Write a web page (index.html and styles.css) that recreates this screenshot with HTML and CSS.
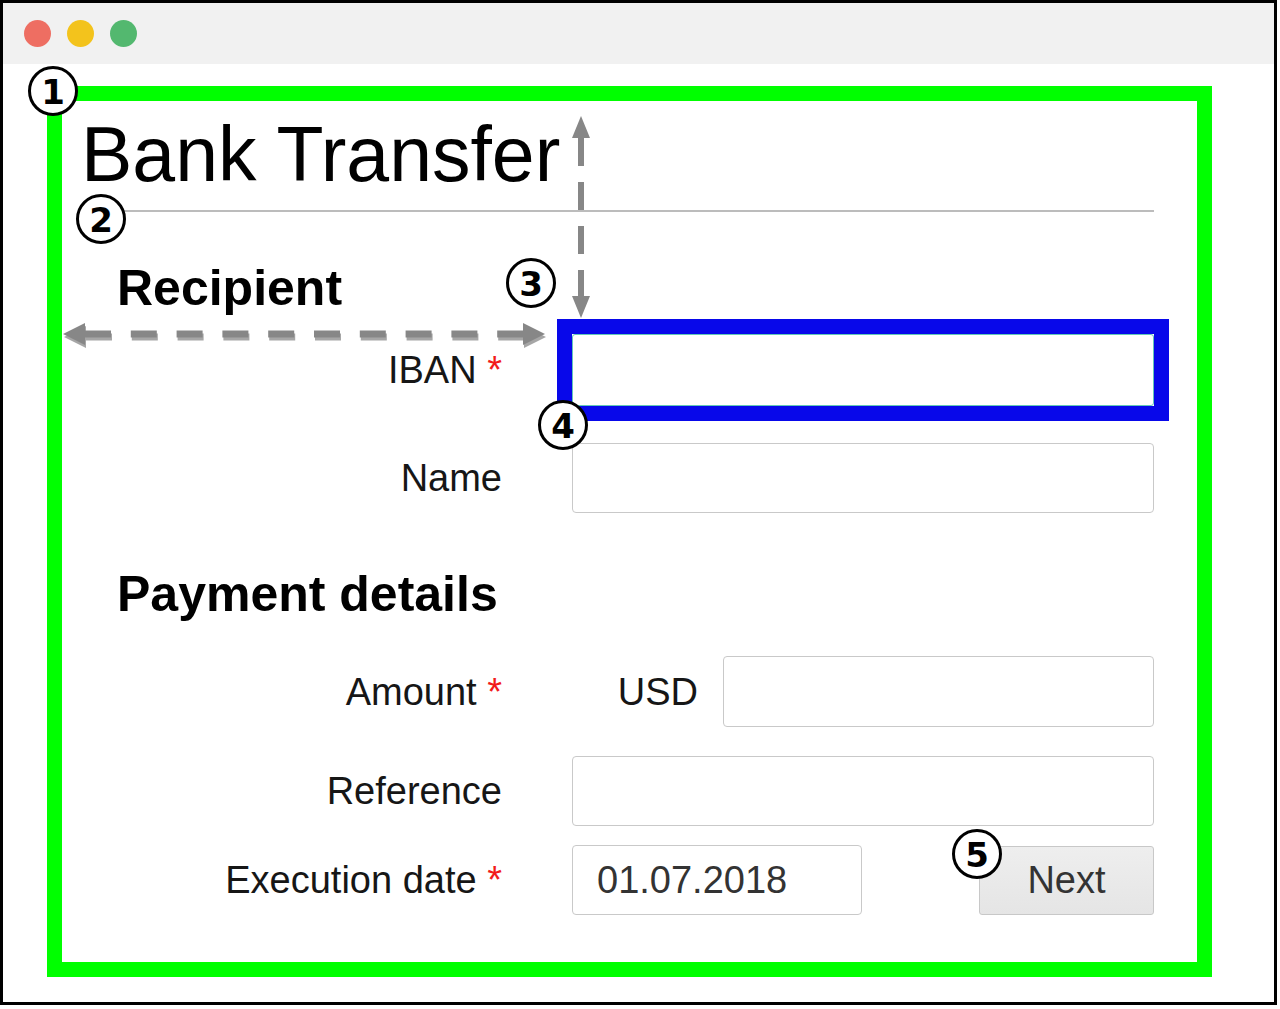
FILE: index.html
```html
<!DOCTYPE html>
<html lang="en">
<head>
<meta charset="utf-8">
<title>Bank Transfer</title>
<link rel="stylesheet" href="styles.css">
</head>
<body>
<div class="window">
  <div class="titlebar">
    <span class="dot dot-red"></span>
    <span class="dot dot-yellow"></span>
    <span class="dot dot-green"></span>
  </div>
  <div class="viewport">
    <main class="frame">
      <h1 class="title">Bank Transfer</h1>
      <hr class="rule">
      <h2 class="group-title group-recipient">Recipient</h2>
      <div class="row row-iban">
        <label class="label">IBAN <span class="req">*</span></label>
        <div class="focus-ring">
          <input class="input input-focus" type="text">
        </div>
      </div>
      <div class="row row-name">
        <label class="label">Name</label>
        <input class="input" type="text">
      </div>
      <h2 class="group-title group-payment">Payment details</h2>
      <div class="row row-amount">
        <label class="label">Amount <span class="req">*</span></label>
        <div class="amount">
          <span class="currency">USD</span>
          <input class="input input-amount" type="text">
        </div>
      </div>
      <div class="row row-ref">
        <label class="label">Reference</label>
        <input class="input" type="text">
      </div>
      <div class="row row-date">
        <label class="label">Execution date <span class="req">*</span></label>
        <div class="date-line">
          <input class="input input-date" type="text" value="01.07.2018">
          <button class="btn" type="button">Next</button>
        </div>
      </div>
    </main>
  </div>
</div>

<svg class="arrows" width="1280" height="1009" viewBox="0 0 1280 1009" xmlns="http://www.w3.org/2000/svg">
  <g transform="translate(1 3)">
    <line x1="85" y1="334" x2="523" y2="334" stroke="#a6a6a6" stroke-width="7" stroke-dasharray="26 19.8"/>
    <polygon points="63,334 85,323 85,345" fill="#a6a6a6"/>
    <polygon points="545,334 523,323 523,345" fill="#a6a6a6"/>
  </g>
  <g>
    <line x1="85" y1="334" x2="523" y2="334" stroke="#878787" stroke-width="7" stroke-dasharray="26 19.8"/>
    <polygon points="63,334 85,323 85,345" fill="#878787"/>
    <polygon points="545,334 523,323 523,345" fill="#878787"/>
  </g>
  <g>
    <line x1="581" y1="138" x2="581" y2="296" stroke="#878787" stroke-width="6" stroke-dasharray="28 16"/>
    <polygon points="581,116 572,138 590,138" fill="#878787"/>
    <polygon points="581,318 572,296 590,296" fill="#878787"/>
  </g>
</svg>

<div class="marker marker-1">1</div>
<div class="marker marker-2">2</div>
<div class="marker marker-3">3</div>
<div class="marker marker-4">4</div>
<div class="marker marker-5">5</div>
</body>
</html>
```

FILE: styles.css
```css
html, body {
  margin: 0;
  padding: 0;
  background: #ffffff;
}

body {
  position: relative;
  width: 1280px;
  height: 1009px;
  font-family: "Liberation Sans", Arial, sans-serif;
  color: #111;
}

.window {
  box-sizing: border-box;
  width: 1277px;
  height: 1005px;
  border: 3px solid #000;
  background: #fff;
  display: flex;
  flex-direction: column;
}

.titlebar {
  height: 61px;
  background: #f1f1f1;
  display: flex;
  align-items: center;
  gap: 16px;
  padding-left: 21px;
  flex-shrink: 0;
}

.dot {
  width: 27px;
  height: 27px;
  border-radius: 50%;
  display: block;
}
.dot-red { background: #ee6e62; }
.dot-yellow { background: #f3c31c; }
.dot-green { background: #53b86f; }

.viewport {
  padding: 22px 0 0 44px;
}

.frame {
  box-sizing: border-box;
  width: 1165px;
  height: 891px;
  border: 15px solid #00ff00;
  padding: 0 43px 0 18px;
  display: flex;
  flex-direction: column;
}

.title {
  margin: 15px 0 0;
  font-size: 77px;
  line-height: 76px;
  font-weight: normal;
  color: #000;
  padding-left: 1px;
}

.rule {
  margin: 18px 0 0;
  height: 2px;
  border: 0;
  background: #bcbcbc;
}

.group-title {
  margin: 0 0 0 37px;
  font-size: 50px;
  line-height: 50px;
  font-weight: bold;
  color: #000;
}
.group-recipient { margin-top: 51px; }
.group-payment { margin-top: 56px; }

.row {
  display: grid;
  grid-template-columns: 420px 582px;
  column-gap: 72px;
  align-items: center;
}
.row-iban { margin-top: 21px; }
.row-name { margin-top: 37px; }
.row-amount { margin-top: 37px; }
.row-ref { margin-top: 29px; }
.row-date { margin-top: 19px; }

.label {
  text-align: right;
  font-size: 38px;
  line-height: 44px;
  color: #161616;
  white-space: nowrap;
  padding-right: 0;
  margin-right: -2px;
}

.req {
  color: #f21b1b;
}

.input {
  box-sizing: border-box;
  width: 582px;
  height: 70px;
  margin: 0;
  border: 1px solid #c9c9c9;
  border-radius: 4px;
  background: #fff;
  font-family: "Liberation Sans", Arial, sans-serif;
  font-size: 38px;
  color: #333;
  padding: 0 24px;
  outline: none;
  display: block;
}

.focus-ring {
  border: 15px solid #0808ea;
  margin: -15px;
}

.input-focus {
  height: 72px;
  border-color: #62c8b8;
  border-radius: 3px;
}

.amount {
  display: flex;
  align-items: center;
  justify-content: flex-end;
  gap: 25px;
}

.currency {
  font-size: 38px;
  line-height: 44px;
  color: #161616;
}

.input-amount {
  width: 431px;
  height: 71px;
}

.date-line {
  display: flex;
  align-items: center;
  justify-content: space-between;
}

.input-date {
  width: 290px;
  height: 70px;
}

.btn {
  box-sizing: border-box;
  width: 175px;
  height: 69px;
  margin: 0;
  border: 1px solid #c8c8c8;
  border-radius: 3px;
  background: linear-gradient(#eeeeee, #e5e5e5);
  font-family: "Liberation Sans", Arial, sans-serif;
  font-size: 38px;
  color: #333;
  padding: 0;
}

.arrows {
  position: absolute;
  left: 0;
  top: 0;
  pointer-events: none;
}

.marker {
  position: absolute;
  box-sizing: border-box;
  width: 50px;
  height: 50px;
  border: 3px solid #000;
  border-radius: 50%;
  background: #fff;
  display: flex;
  align-items: center;
  justify-content: center;
  font-family: "DejaVu Sans", sans-serif;
  font-weight: bold;
  font-size: 34px;
  line-height: 1;
  color: #000;
  padding-top: 1px;
}
.marker-1 { left: 28px; top: 66px; }
.marker-2 { left: 76px; top: 194px; }
.marker-3 { left: 506px; top: 258px; }
.marker-4 { left: 538px; top: 400px; }
.marker-5 { left: 952px; top: 829px; }
```
